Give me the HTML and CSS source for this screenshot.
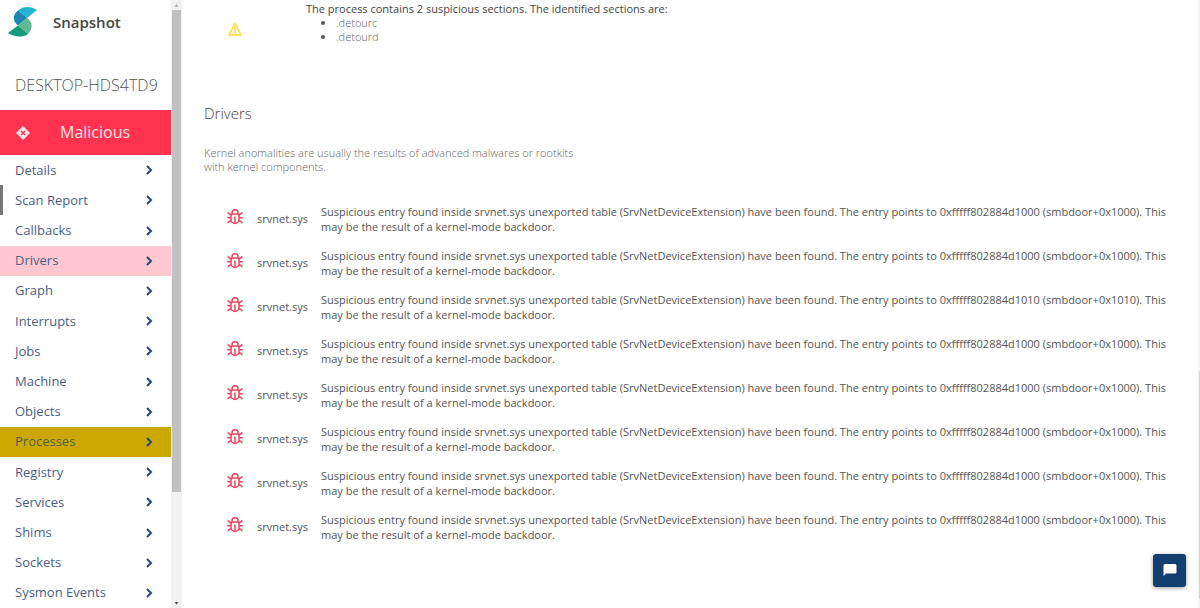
FILE: index.html
```html
<!DOCTYPE html>
<html lang="en">
<head>
    <meta charset="UTF-8">
    <meta name="viewport" content="width=device-width, initial-scale=1.0">
    <title>Snapshot</title>
    <link rel="stylesheet" href="styles.css">
</head>
<body>
    <!-- Shared icons -->
    <svg class="sprite" aria-hidden="true">
        <symbol id="chevron" viewBox="0 0 8 10">
            <path d="M2 1l4 4-4 4" fill="none" stroke="currentColor" stroke-width="2"/>
        </symbol>
        <symbol id="bug" viewBox="0 0 16 16">
            <g fill="none" stroke="currentColor" stroke-width="1.5">
                <path d="M6 5h4a2 2 0 0 1 2 2v3.500a4 4 0 0 1-8 0V7a2 2 0 0 1 2-2z"/>
                <path d="M5 5V3.800a3 3 0 0 1 6 0V5"/>
                <path d="M8 7.500v7M.3 8.800H4M12 8.800h3.700M1.200 3.200v1L4 6M14.800 3.200v1L12 6M1.200 14.300v-1.200L4 11.500M14.800 14.300v-1.200L12 11.500"/>
            </g>
        </symbol>
    </svg>

    <div class="page">
        <aside class="sidebar">
            <div class="brand">
                <svg class="logo" viewBox="0 0 30 32">
                    <path d="M10 4.500C15 0 23 0 29 4L19 12z" fill="#22b5d3"/>
                    <path d="M10 4.500l9 7.500-9 7.500C4.500 15 4.500 9 10 4.500z" fill="#1b84b3"/>
                    <path d="M19 12c6 4 6 11 1 16l-10-8.500z" fill="#5dba94"/>
                    <path d="M10 19.500L20 28c-6 4-14 3-20-1z" fill="#149b78"/>
                </svg>
                <span class="brand-name">Snapshot</span>
            </div>
            <div class="host">DESKTOP-HDS4TD9</div>
            <div class="verdict">
                <svg class="verdict-icon" viewBox="0 0 14 14">
                    <path d="M7 0l7 7-7 7-7-7z" fill="#ffe3e8"/>
                    <path d="M5 5l4 4M9 5L5 9" stroke="#ff334f" stroke-width="1.5"/>
                </svg>
                <span class="verdict-text">Malicious</span>
            </div>
            <nav class="menu">
                <a href="#">Details <svg><use href="#chevron"/></svg></a>
                <a href="#" class="current">Scan Report <svg><use href="#chevron"/></svg></a>
                <a href="#">Callbacks <svg><use href="#chevron"/></svg></a>
                <a href="#" class="danger">Drivers <svg><use href="#chevron"/></svg></a>
                <a href="#">Graph <svg><use href="#chevron"/></svg></a>
                <a href="#">Interrupts <svg><use href="#chevron"/></svg></a>
                <a href="#">Jobs <svg><use href="#chevron"/></svg></a>
                <a href="#">Machine <svg><use href="#chevron"/></svg></a>
                <a href="#">Objects <svg><use href="#chevron"/></svg></a>
                <a href="#" class="warning">Processes <svg><use href="#chevron"/></svg></a>
                <a href="#">Registry <svg><use href="#chevron"/></svg></a>
                <a href="#">Services <svg><use href="#chevron"/></svg></a>
                <a href="#">Shims <svg><use href="#chevron"/></svg></a>
                <a href="#">Sockets <svg><use href="#chevron"/></svg></a>
                <a href="#">Sysmon Events <svg><use href="#chevron"/></svg></a>
            </nav>
        </aside>

        <div class="scrollbar" aria-hidden="true">
            <svg viewBox="0 0 10 10"><path d="M3 7l2-3 2 3z" fill="#a3a3a3"/></svg>
            <div class="track"><div class="thumb"></div></div>
            <svg viewBox="0 0 10 10"><path d="M3 4l2 3 2-3z" fill="#505050"/></svg>
        </div>

        <main class="content">
            <section class="process">
                <svg class="warn-icon" viewBox="0 0 14 14">
                    <path d="M7 1.500L13 13H1z" fill="none" stroke="#ffdc2e" stroke-width="1.5"/>
                    <path d="M7 5v7" stroke="#ffdc2e" stroke-width="1.5"/>
                </svg>
                <div class="process-text">
                    <p>The process contains 2 suspicious sections. The identified sections are:</p>
                    <ul>
                        <li><span>.detourc</span></li>
                        <li><span>.detourd</span></li>
                    </ul>
                </div>
            </section>

            <section class="drivers">
                <h2>Drivers</h2>
                <p class="description">Kernel anomalities are usually the results of advanced malwares or rootkits with kernel components.</p>
                <table>
                    <tbody>
                        <tr>
                            <td class="icon"><svg><use href="#bug"/></svg></td>
                            <td class="name">srvnet.sys</td>
                            <td>Suspicious entry found inside srvnet.sys unexported table (SrvNetDeviceExtension) have been found. The entry points to 0xfffff802884d1000 (smbdoor+0x1000). This may be the result of a kernel-mode backdoor.</td>
                        </tr>
                        <tr>
                            <td class="icon"><svg><use href="#bug"/></svg></td>
                            <td class="name">srvnet.sys</td>
                            <td>Suspicious entry found inside srvnet.sys unexported table (SrvNetDeviceExtension) have been found. The entry points to 0xfffff802884d1000 (smbdoor+0x1000). This may be the result of a kernel-mode backdoor.</td>
                        </tr>
                        <tr>
                            <td class="icon"><svg><use href="#bug"/></svg></td>
                            <td class="name">srvnet.sys</td>
                            <td>Suspicious entry found inside srvnet.sys unexported table (SrvNetDeviceExtension) have been found. The entry points to 0xfffff802884d1010 (smbdoor+0x1010). This may be the result of a kernel-mode backdoor.</td>
                        </tr>
                        <tr>
                            <td class="icon"><svg><use href="#bug"/></svg></td>
                            <td class="name">srvnet.sys</td>
                            <td>Suspicious entry found inside srvnet.sys unexported table (SrvNetDeviceExtension) have been found. The entry points to 0xfffff802884d1000 (smbdoor+0x1000). This may be the result of a kernel-mode backdoor.</td>
                        </tr>
                        <tr>
                            <td class="icon"><svg><use href="#bug"/></svg></td>
                            <td class="name">srvnet.sys</td>
                            <td>Suspicious entry found inside srvnet.sys unexported table (SrvNetDeviceExtension) have been found. The entry points to 0xfffff802884d1000 (smbdoor+0x1000). This may be the result of a kernel-mode backdoor.</td>
                        </tr>
                        <tr>
                            <td class="icon"><svg><use href="#bug"/></svg></td>
                            <td class="name">srvnet.sys</td>
                            <td>Suspicious entry found inside srvnet.sys unexported table (SrvNetDeviceExtension) have been found. The entry points to 0xfffff802884d1000 (smbdoor+0x1000). This may be the result of a kernel-mode backdoor.</td>
                        </tr>
                        <tr>
                            <td class="icon"><svg><use href="#bug"/></svg></td>
                            <td class="name">srvnet.sys</td>
                            <td>Suspicious entry found inside srvnet.sys unexported table (SrvNetDeviceExtension) have been found. The entry points to 0xfffff802884d1000 (smbdoor+0x1000). This may be the result of a kernel-mode backdoor.</td>
                        </tr>
                        <tr>
                            <td class="icon"><svg><use href="#bug"/></svg></td>
                            <td class="name">srvnet.sys</td>
                            <td>Suspicious entry found inside srvnet.sys unexported table (SrvNetDeviceExtension) have been found. The entry points to 0xfffff802884d1000 (smbdoor+0x1000). This may be the result of a kernel-mode backdoor.</td>
                        </tr>
                    </tbody>
                </table>
            </section>
        </main>

        <div class="page-scroll" aria-hidden="true"><div class="page-thumb"></div></div>
    </div>

    <button class="chat" type="button" aria-label="Open chat">
        <svg viewBox="0 0 14 13"><path d="M2 0h10a1.500 1.500 0 0 1 1.500 1.500v6.500a1.500 1.500 0 0 1-1.500 1.500H3L.5 12V1.500A1.500 1.500 0 0 1 2 0z" fill="#fff"/></svg>
    </button>
</body>
</html>
```
FILE: styles.css
```css
* {
    box-sizing: border-box;
}
body {
    margin: 0;
    font-family: "Open Sans", "Noto Sans", sans-serif;
    font-size: 11px;
    line-height: 15px;
    color: #555;
    background-color: #fff;
}
h2, p, ul {
    margin: 0;
}
.sprite {
    display: none;
}
.page {
    display: flex;
    height: 100vh;
    overflow: hidden;
}

/* Sidebar */
.sidebar {
    display: flex;
    flex-direction: column;
    width: 171px;
    flex-shrink: 0;
}
.brand {
    display: flex;
    align-items: center;
    gap: 15px;
    height: 44px;
    flex-shrink: 0;
    padding: 0 8px;
}
.logo {
    width: 30px;
    height: 32px;
}
.brand-name {
    font-size: 15px;
    font-weight: 600;
    color: #444;
}
.host {
    padding: 31px 0 15px 15px;
    font-size: 16px;
    font-weight: 300;
    line-height: 20px;
    white-space: nowrap;
    color: #555;
}
.verdict {
    display: flex;
    align-items: center;
    gap: 30px;
    height: 45px;
    flex-shrink: 0;
    padding: 0 16px;
    background-color: #ff334f;
    color: #ffe3e8;
}
.verdict-icon {
    width: 14px;
    height: 14px;
}
.verdict-text {
    font-size: 16px;
}
.menu {
    display: flex;
    flex-direction: column;
    flex: 1;
}
.menu a {
    display: flex;
    flex: 1;
    align-items: center;
    justify-content: space-between;
    min-height: 30px;
    padding: 0 18px 0 15px;
    font-size: 13px;
    color: #4a6186;
    text-decoration: none;
}
.menu svg {
    width: 8px;
    height: 10px;
    color: #22497b;
}
.menu .current {
    padding-left: 12px;
    border-left: 3px solid #777;
}
.menu .danger {
    background-color: #ffc8d0;
}
.menu .warning {
    background-color: #cca700;
    color: #54604a;
}

/* Scrollbars */
.scrollbar {
    display: flex;
    flex-direction: column;
    width: 11px;
    flex-shrink: 0;
    padding: 0 1px;
    background-color: #f1f1f1;
}
.scrollbar svg {
    height: 10px;
}
.track {
    flex: 1;
}
.thumb {
    height: 82%;
    background-color: #c1c1c1;
}
.page-scroll {
    display: flex;
    align-items: flex-end;
    width: 2px;
    padding: 0 0 9px 1px;
    background-color: #f5f5f5;
}
.page-thumb {
    width: 1px;
    height: 38%;
    background-color: #d5d5d5;
}

/* Report */
.content {
    flex: 1;
    padding: 1px 28px 0 22px;
}
.process {
    display: flex;
    gap: 64px;
    padding-left: 24px;
}
.warn-icon {
    width: 14px;
    height: 14px;
    margin-top: 21px;
}
.process-text p {
    font-weight: 500;
    color: #444;
}
.process-text ul {
    padding-left: 30px;
    line-height: 14px;
}
.process-text span {
    font-weight: 300;
    color: #666;
}
.drivers {
    padding-top: 59px;
}
.drivers h2 {
    font-size: 15px;
    font-weight: 300;
    line-height: 20px;
    color: #444;
}
.description {
    max-width: 370px;
    margin: 23px 0 30px;
    font-weight: 300;
    line-height: 14px;
    color: #666;
}
table {
    border-collapse: collapse;
}
td {
    padding: 0 0 14px;
    vertical-align: top;
}
.icon {
    width: 53px;
    padding-left: 23px;
}
.icon svg {
    display: block;
    width: 16px;
    height: 16px;
    margin-top: 5px;
    color: #f5415c;
}
.name {
    width: 64px;
    padding-top: 7px;
}

/* Chat button */
.chat {
    display: flex;
    align-items: center;
    justify-content: center;
    position: fixed;
    right: 14px;
    bottom: 21px;
    width: 33px;
    height: 33px;
    padding: 0;
    border: none;
    border-radius: 3px;
    background-color: #123f70;
    box-shadow: 0 1px 4px rgba(0, 0, 0, 0.4);
}
.chat svg {
    width: 14px;
    height: 13px;
}
```
